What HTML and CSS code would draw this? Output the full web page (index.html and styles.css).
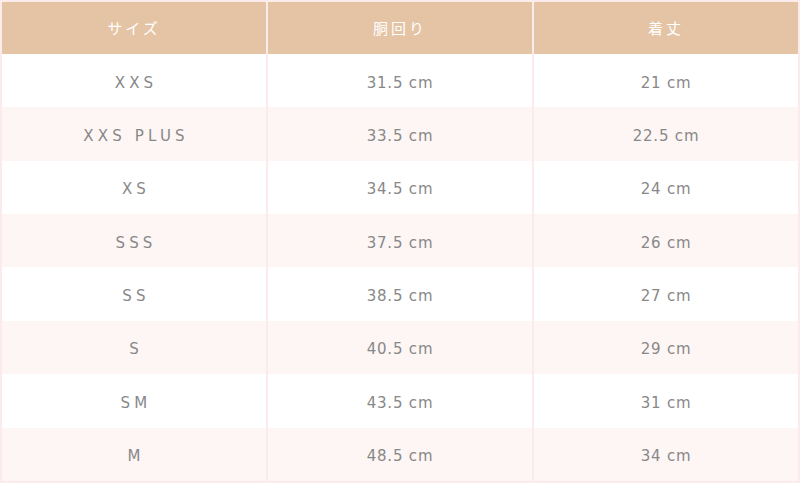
FILE: index.html
```html
<!DOCTYPE html>
<html lang="ja">
<head>
<meta charset="utf-8">
<link rel="stylesheet" href="styles.css">
</head>
<body>
<table class="size-table">
  <thead>
    <tr><th>サイズ</th><th>胴回り</th><th>着丈</th></tr>
  </thead>
  <tbody>
    <tr><td class="size">XXS</td><td>31.5 cm</td><td>21 cm</td></tr>
    <tr><td class="size">XXS PLUS</td><td>33.5 cm</td><td>22.5 cm</td></tr>
    <tr><td class="size">XS</td><td>34.5 cm</td><td>24 cm</td></tr>
    <tr><td class="size">SSS</td><td>37.5 cm</td><td>26 cm</td></tr>
    <tr><td class="size">SS</td><td>38.5 cm</td><td>27 cm</td></tr>
    <tr><td class="size">S</td><td>40.5 cm</td><td>29 cm</td></tr>
    <tr><td class="size">SM</td><td>43.5 cm</td><td>31 cm</td></tr>
    <tr><td class="size">M</td><td>48.5 cm</td><td>34 cm</td></tr>
  </tbody>
</table>
</body>
</html>
```
FILE: styles.css
```css
html, body {
  margin: 0;
  padding: 0;
  background: #ffffff;
}
.size-table {
  width: 800px;
  height: 483px;
  border-collapse: collapse;
  table-layout: fixed;
  border: 2px solid #fbeceb;
  font-family: "DejaVu Sans", "Noto Sans CJK JP", sans-serif;
}
.size-table th,
.size-table td {
  border-left: 2px solid #fbeceb;
  border-right: 2px solid #fbeceb;
  text-align: center;
  vertical-align: middle;
  padding: 0;
}
.size-table th {
  background: #e4c4a4;
  color: #ffffff;
  font-family: "Noto Sans CJK JP", sans-serif;
  font-weight: 400;
  font-size: 15px;
  letter-spacing: 3px;
  height: 50px;
  padding-bottom: 2px;
}
.size-table td {
  color: #888888;
  font-size: 15px;
  font-weight: 400;
  letter-spacing: 0.8px;
  height: 49px;
  padding-top: 4px;
}
.size-table td.size {
  letter-spacing: 4.2px;
  padding-left: 4px;
}
.size-table tbody tr:nth-child(even) td {
  background: #fdf6f5;
}
```
